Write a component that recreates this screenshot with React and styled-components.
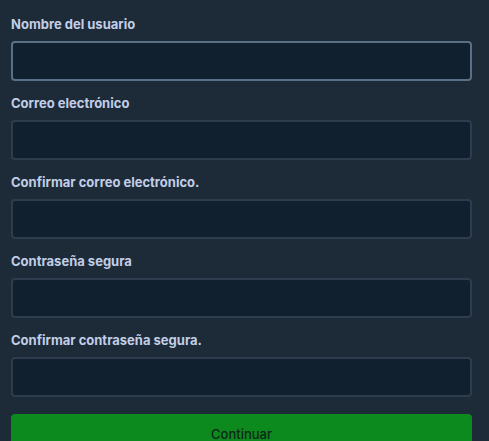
import styled, { createGlobalStyle } from "styled-components";

const GlobalStyle = createGlobalStyle`
  html, body {
    margin: 0;
    padding: 0;
    background: #1d2b39;
  }
  * { box-sizing: border-box; }
`;

const fields = [
  { label: "Nombre del usuario", focused: true },
  { label: "Correo electrónico" },
  { label: "Confirmar correo electrónico." },
  { label: "Contraseña segura", type: "password" },
  { label: "Confirmar contraseña segura.", type: "password" },
];

export default function App() {
  return (
    <>
      <GlobalStyle />
      <Form onSubmit={(e) => e.preventDefault()}>
        {fields.map((f) => (
          <Field key={f.label}>
            <Label>{f.label}</Label>
            <Input type={f.type || "text"} $focused={f.focused} />
          </Field>
        ))}
        <Button type="submit">Continuar</Button>
      </Form>
    </>
  );
}

const Form = styled.form`
  display: flex;
  flex-direction: column;
  padding: 14px 17px 20px 11px;
  min-height: 100vh;
  background: #1d2b39;
  font-family: Inter, "Noto Sans", sans-serif;
`;

const Field = styled.div`
  display: flex;
  flex-direction: column;
  margin-bottom: 12px;
`;

const Label = styled.label`
  font-size: 13px;
  line-height: 20px;
  font-weight: 700;
  color: #c2cee6;
  margin-bottom: 7px;
`;

const Input = styled.input`
  height: 40px;
  width: 100%;
  background: #11202f;
  border: 2px solid ${(p) => (p.$focused ? "#5a7087" : "#2d3d4e")};
  border-radius: 4px;
  color: #e6edf5;
  font-size: 14px;
  padding: 0 10px;
  outline: none;
`;

const Button = styled.button`
  margin-top: 5px;
  height: 40px;
  width: 100%;
  border: none;
  border-radius: 4px;
  background: #0c8a1e;
  color: #10261a;
  font-family: Inter, "Noto Sans", sans-serif;
  font-size: 13px;
  font-weight: 500;
  cursor: pointer;
`;
